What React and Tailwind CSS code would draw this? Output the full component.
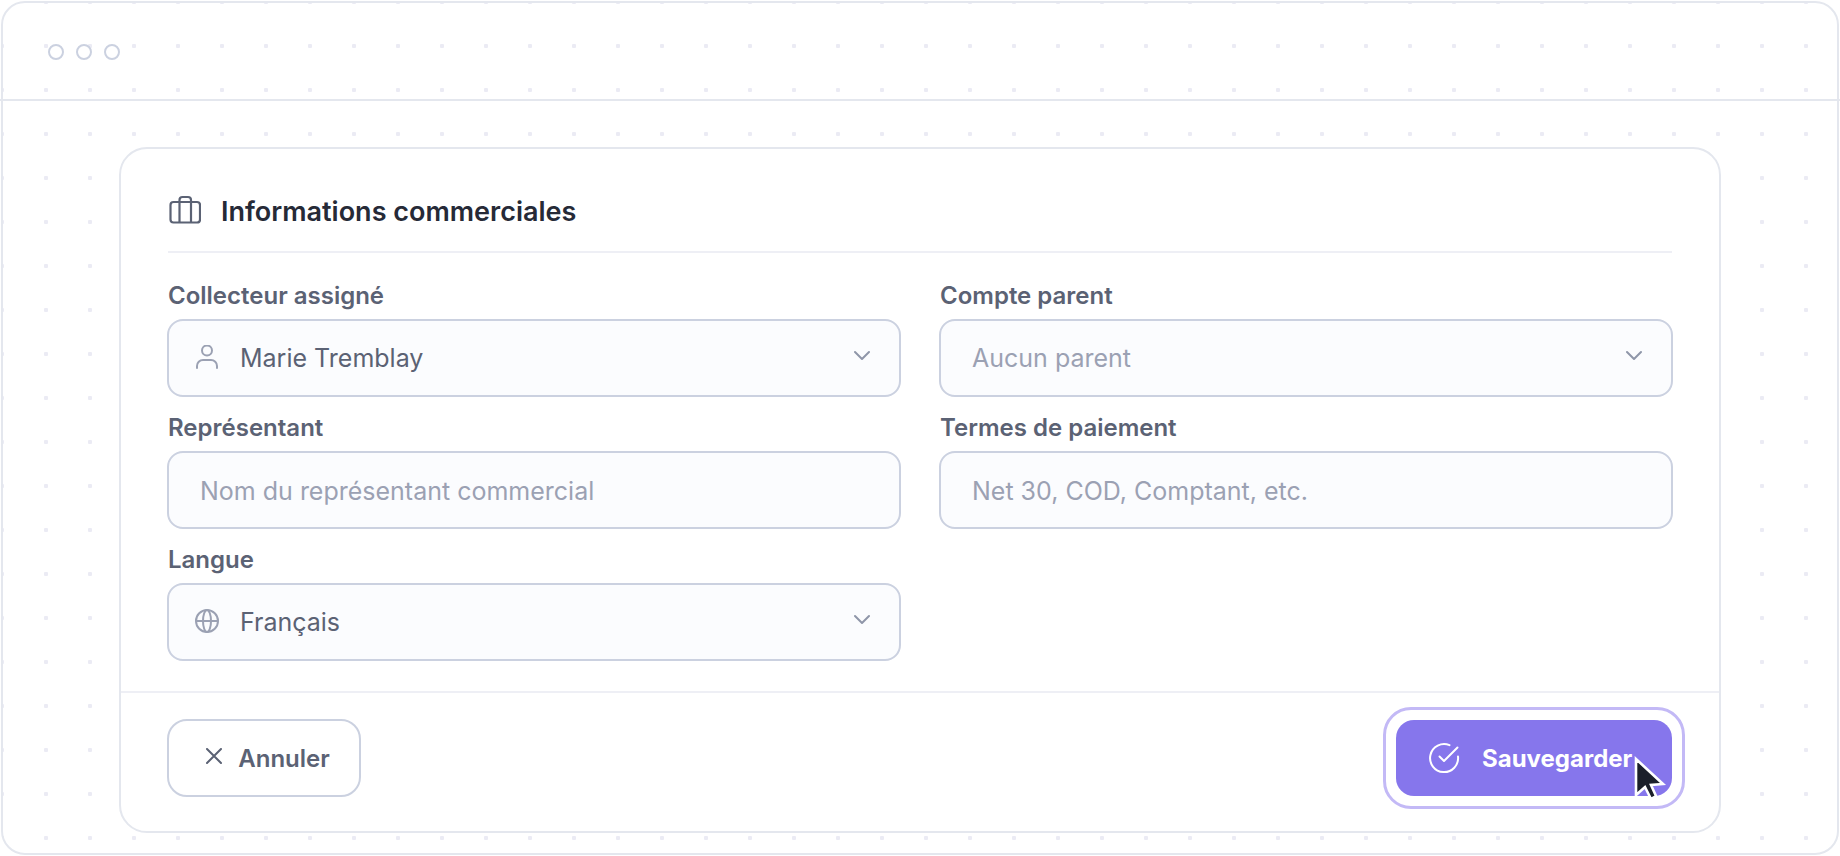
import { useState } from 'react';

const fieldClass =
    'block h-[78px] w-full appearance-none rounded-2xl border-2 border-[#cbd1e0] bg-[#fbfcfe] pt-0.5 pr-20 text-[25px] outline-none placeholder:text-[#9ba1b3]';

const BriefcaseIcon = () => (
    <svg className="h-8 w-8" viewBox="0 0 32 32" fill="none" stroke="currentColor" strokeWidth="2.2" strokeLinejoin="round">
        <rect x="1.500" y="8" width="29.500" height="20.500" rx="3" />
        <path d="M10.500 28.500V6a3 3 0 0 1 3-3h5.500a3 3 0 0 1 3 3v22.500" />
    </svg>
);

const UserIcon = () => (
    <svg className="h-6 w-6" viewBox="0 0 24 24" fill="none" stroke="currentColor" strokeWidth="2" strokeLinecap="round">
        <circle cx="12" cy="5.500" r="5" />
        <path d="M2 23v-2a6 6 0 0 1 6-6h8a6 6 0 0 1 6 6v2" />
    </svg>
);

const GlobeIcon = () => (
    <svg className="h-6 w-6" viewBox="0 0 24 24" fill="none" stroke="currentColor" strokeWidth="2">
        <circle cx="12" cy="12" r="11" />
        <path d="M1 12h22" />
        <ellipse cx="12" cy="12" rx="4" ry="11" />
    </svg>
);

const ChevronIcon = () => (
    <svg className="h-4 w-4" viewBox="0 0 16 16" fill="none" stroke="currentColor" strokeWidth="2" strokeLinecap="round" strokeLinejoin="round">
        <path d="M1 4l7 7 7-7" />
    </svg>
);

const CloseIcon = () => (
    <svg className="h-4 w-4" viewBox="0 0 16 16" fill="none" stroke="currentColor" strokeWidth="2" strokeLinecap="round">
        <path d="M1 1l14 14M15 1L1 15" />
    </svg>
);

const CheckIcon = () => (
    <svg className="h-8 w-8" viewBox="0 0 32 32" fill="none" stroke="currentColor" strokeWidth="2" strokeLinecap="round" strokeLinejoin="round">
        <path d="M21.500 3.200A14 14 0 1 0 30 14.500" />
        <path d="M11.500 14.500l4.500 4.500L29.500 5.500" />
    </svg>
);

const CursorIcon = () => (
    <svg className="h-12 w-9" viewBox="0 0 36 48" fill="none">
        <path d="M4 5v36l9-8 6 12 5-3-5-11 12-1z" fill="#1b1f2a" stroke="#fff" strokeWidth="2.600" />
    </svg>
);

const Field = ({ id, label, children }) => (
    <div>
        <label htmlFor={id} className="mb-2 block pl-px text-[24px] leading-[30px] font-semibold text-[#5b6274]">
            {label}
        </label>
        {children}
    </div>
);

const SelectField = ({ id, label, icon, options, muted }) => {
    const [value, setValue] = useState(options[0]);

    return (
        <Field id={id} label={label}>
            <div className="relative">
                {icon && (
                    <span className="pointer-events-none absolute inset-y-0 left-7 flex items-center pb-0.5 text-[#9ba1b3]">{icon}</span>
                )}
                <select
                    id={id}
                    value={value}
                    onChange={(e) => setValue(e.target.value)}
                    className={`${fieldClass} ${icon ? 'pl-[71px]' : 'pl-[31px]'} ${muted ? 'text-[#9ba1b3]' : 'text-[#5b6274]'}`}
                >
                    {options.map((option) => (
                        <option key={option}>{option}</option>
                    ))}
                </select>
                <span className="pointer-events-none absolute inset-y-0 right-[31px] flex items-center pb-1 text-[#8f96a9]">
                    <ChevronIcon />
                </span>
            </div>
        </Field>
    );
};

const TextField = ({ id, label, placeholder }) => (
    <Field id={id} label={label}>
        <input id={id} type="text" placeholder={placeholder} className={`${fieldClass} pl-[31px] text-[#5b6274]`} />
    </Field>
);

const App = () => {
    return (
        <div className="bg-white p-px font-[Inter,sans-serif]">
            <div className="rounded-3xl border-2 border-[#e4e7ee] bg-[radial-gradient(circle_at_center,#ebebf4_2px,transparent_2.5px)] bg-[length:44px_44px] bg-[position:-23px_-23px]">
                {/* Window bar */}
                <div className="-mx-[3px] flex h-[98px] items-center gap-3 border-b-2 border-[#e4e7ee] px-12 pt-0.5">
                    <span className="h-4 w-4 rounded-full border-2 border-[#cbd1e0] bg-white"></span>
                    <span className="h-4 w-4 rounded-full border-2 border-[#cbd1e0] bg-white"></span>
                    <span className="h-4 w-4 rounded-full border-2 border-[#cbd1e0] bg-white"></span>
                </div>

                <div className="px-[116px] pt-[46px] pb-5">
                    <form className="rounded-[28px] border-2 border-[#e4e7ee] bg-white" onSubmit={(e) => e.preventDefault()}>
                        <div className="px-[46px] pb-[30px]">
                            <div className="mx-px flex h-[104px] items-center gap-5 border-b-2 border-[#eeeff5] pt-6">
                                <span className="pb-1 pl-px text-[#5b6274]">
                                    <BriefcaseIcon />
                                </span>
                                <h1 className="text-[27px] font-semibold text-[#262a37]">Informations commerciales</h1>
                            </div>

                            <div className="grid grid-cols-2 gap-x-[38px] gap-y-4 pt-7">
                                <SelectField id="collecteur" label="Collecteur assigné" icon={<UserIcon />} options={['Marie Tremblay']} />
                                <SelectField id="parent" label="Compte parent" options={['Aucun parent']} muted />
                                <TextField id="representant" label="Représentant" placeholder="Nom du représentant commercial" />
                                <TextField id="termes" label="Termes de paiement" placeholder="Net 30, COD, Comptant, etc." />
                                <SelectField id="langue" label="Langue" icon={<GlobeIcon />} options={['Français', 'English']} />
                            </div>
                        </div>

                        {/* Actions */}
                        <div className="flex items-center justify-between border-t-2 border-[#eeeff5] px-[46px] pt-[26px] pb-[34px]">
                            <button type="button" className="flex h-[78px] w-[194px] items-center justify-center gap-4 rounded-[20px] border-2 border-[#cbd1e0] bg-white pl-2 text-[24px] font-semibold text-[#5b6274]">
                                <span className="pb-1">
                                    <CloseIcon />
                                </span>
                                <span className="pt-0.5">Annuler</span>
                            </button>
                            <button type="submit" className="relative mr-px flex h-[76px] w-[276px] items-center gap-[22px] rounded-[18px] bg-[#8676ec] pl-8 text-[24px] font-bold text-white">
                                <span className="pointer-events-none absolute -inset-[13px] rounded-[28px] border-3 border-[#c3b9f6]"></span>
                                <CheckIcon />
                                <span className="pt-0.5">Sauvegarder</span>
                                <span className="pointer-events-none absolute top-[34px] right-1">
                                    <CursorIcon />
                                </span>
                            </button>
                        </div>
                    </form>
                </div>
            </div>
        </div>
    );
};

export default App;
